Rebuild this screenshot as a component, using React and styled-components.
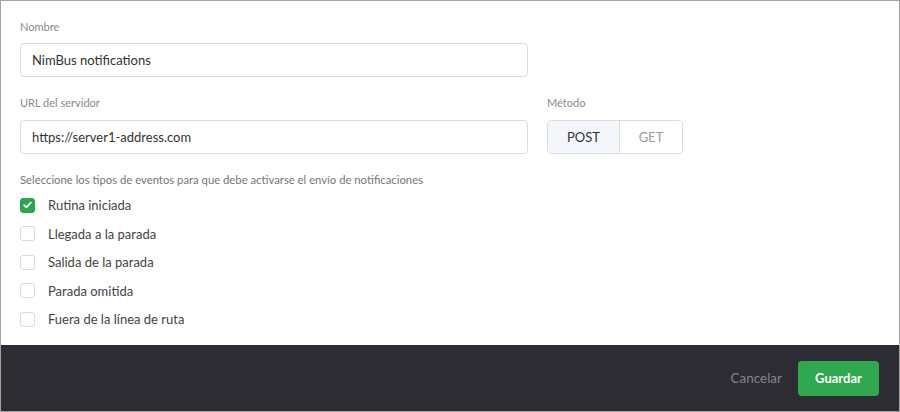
import React, { useState } from "react";
import styled, { createGlobalStyle } from "styled-components";

const Global = createGlobalStyle`
  html, body { margin: 0; padding: 0; background: #fff; }
  body { font-family: Lato, "Open Sans", sans-serif; }
  * { box-sizing: border-box; }
`;

const Frame = styled.div`
  width: 900px;
  height: 412px;
  border: 1px solid #a2a2a2;
  display: flex;
  flex-direction: column;
  background: #fff;
`;

const Body = styled.div`
  flex: 1;
  padding: 19px 19px 0 19px;
  display: flex;
  flex-direction: column;
`;

const Label = styled.div`
  font-size: 11px;
  line-height: 14px;
  color: #8a8a8a;
  margin-bottom: ${(p) => p.$mb || 9}px;
`;

const Field = styled.div`
  display: flex;
  flex-direction: column;
`;

const Input = styled.input`
  width: 508px;
  height: 34px;
  border: 1px solid #dcdcdc;
  border-radius: 4px;
  padding: 0 11px;
  font-family: inherit;
  font-size: 13px;
  color: #333;
  outline: none;
`;

const Row = styled.div`
  display: flex;
  gap: 19px;
  margin-top: ${(p) => p.$mt || 0}px;
`;

const Segmented = styled.div`
  display: flex;
  height: 34px;
  border: 1px solid #dcdcdc;
  border-radius: 4px;
  overflow: hidden;
  width: 136px;
`;

const SegButton = styled.button`
  border: none;
  border-left: ${(p) => (p.$first ? "none" : "1px solid #dcdcdc")};
  background: ${(p) => (p.$active ? "#f3f6fa" : "#fff")};
  color: ${(p) => (p.$active ? "#333" : "#9a9a9a")};
  font-family: inherit;
  font-size: 13px;
  width: ${(p) => p.$w}px;
  padding: 0;
  cursor: pointer;
`;

const Hint = styled.div`
  font-size: 11.3px;
  line-height: 14px;
  color: #777;
  margin-top: 19px;
  margin-bottom: 4px;
`;

const CheckRow = styled.label`
  display: flex;
  align-items: center;
  height: 28.5px;
  gap: 13px;
  font-size: 13px;
  color: #444;
  cursor: pointer;
`;

const Box = styled.span`
  width: 15px;
  height: 15px;
  border-radius: 3px;
  border: 1px solid ${(p) => (p.$checked ? "#2ea44f" : "#dcdcdc")};
  background: ${(p) => (p.$checked ? "#2ea44f" : "#fff")};
  display: flex;
  align-items: center;
  justify-content: center;
`;

const Footer = styled.div`
  height: 66px;
  background: #2c2c32;
  display: flex;
  align-items: center;
  justify-content: flex-end;
  padding-right: 20px;
  gap: 16px;
`;

const LinkButton = styled.button`
  background: none;
  border: none;
  color: #808594;
  font-family: inherit;
  font-size: 13.5px;
  padding: 0;
  cursor: pointer;
`;

const PrimaryButton = styled.button`
  background: #2fa84f;
  border: none;
  border-radius: 4px;
  color: #fff;
  font-family: inherit;
  font-weight: 700;
  font-size: 13px;
  width: 81px;
  height: 35px;
  cursor: pointer;
`;

const events = [
  "Rutina iniciada",
  "Llegada a la parada",
  "Salida de la parada",
  "Parada omitida",
  "Fuera de la línea de ruta",
];

export default function App() {
  const [checked, setChecked] = useState([true, false, false, false, false]);
  const [method, setMethod] = useState("POST");
  return (
    <>
      <Global />
      <Frame>
        <Body>
          <Field>
            <Label>Nombre</Label>
            <Input defaultValue="NimBus notifications" />
          </Field>
          <Row $mt={19}>
            <Field>
              <Label $mb={10}>URL del servidor</Label>
              <Input defaultValue="https://server1-address.com" />
            </Field>
            <Field>
              <Label $mb={10}>Método</Label>
              <Segmented>
                <SegButton $first $w={72} $active={method === "POST"} onClick={() => setMethod("POST")}>
                  POST
                </SegButton>
                <SegButton $w={64} $active={method === "GET"} onClick={() => setMethod("GET")}>
                  GET
                </SegButton>
              </Segmented>
            </Field>
          </Row>
          <Hint>Seleccione los tipos de eventos para que debe activarse el envío de notificaciones</Hint>
          {events.map((e, i) => (
            <CheckRow
              key={e}
              onClick={() => setChecked((c) => c.map((v, j) => (j === i ? !v : v)))}
            >
              <Box $checked={checked[i]}>
                {checked[i] && (
                  <svg width="9" height="8" viewBox="0 0 9 8">
                    <path d="M1.2 4.2 L3.4 6.3 L7.8 1.6" fill="none" stroke="#fff" strokeWidth="1.8" strokeLinecap="round" strokeLinejoin="round" />
                  </svg>
                )}
              </Box>
              {e}
            </CheckRow>
          ))}
        </Body>
        <Footer>
          <LinkButton>Cancelar</LinkButton>
          <PrimaryButton>Guardar</PrimaryButton>
        </Footer>
      </Frame>
    </>
  );
}
